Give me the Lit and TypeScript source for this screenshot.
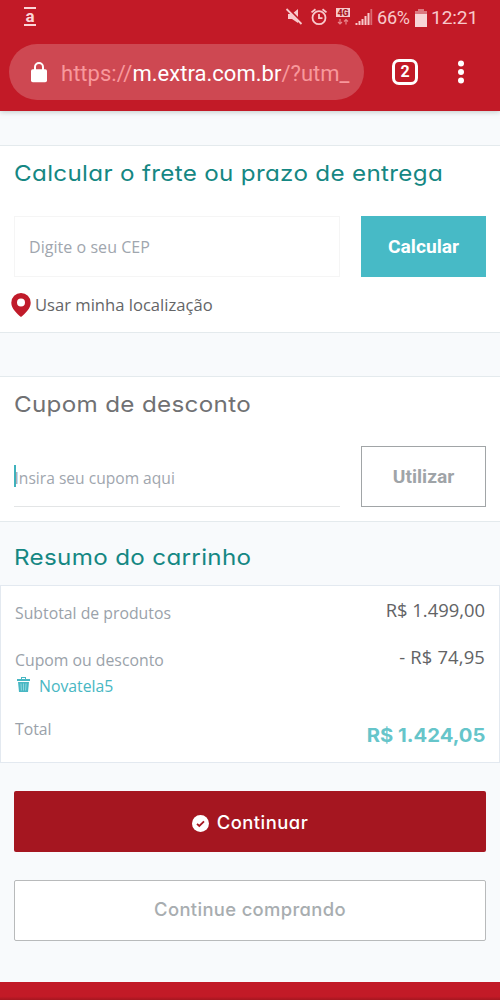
import { LitElement, html, css } from "lit";
import { customElement } from "lit/decorators.js";

@customElement("app-root")
export class AppRoot extends LitElement {
  static styles = css`
    :host { display: block; width: 500px; height: 1000px; overflow: hidden; background: #f8fafc; font-family: "Open Sans", "Noto Sans", sans-serif; color: #646567; }
    * { box-sizing: border-box; }
    svg { display: block; flex: none; }
    .page { height: 1000px; display: flex; flex-direction: column; white-space: nowrap; }
    .chrome { height: 111px; flex: none; background: #c21a27; box-shadow: 0 1px 5px #8fa09c88; font-family: Roboto, sans-serif; }
    .status { height: 35px; display: flex; align-items: center; padding: 0 21px 0 24px; color: #f8c9cb; }
    .app { width: 12px; border: solid #fbd5d7; border-width: 2px 0; color: #fbd5d7; font-size: 17px; font-weight: 700; line-height: 15px; height: 19px; text-align: center; margin-top: -2px; }
    .grow { flex: 1; }
    .icons { display: flex; align-items: center; }
    .pct { font-size: 18px; letter-spacing: -0.2px; margin-left: 3px; width: 38px; line-height: 35px; }
    .time { font-size: 19.2px; line-height: 35px; margin-left: 4px; width: 48px; letter-spacing: -0.15px; }
    .bar { display: flex; align-items: center; padding: 9px 0 0 9px; }
    .pill { width: 355px; height: 56px; border-radius: 28px; background: #ce4852; display: flex; align-items: center; padding-left: 22px; }
    .url { margin-left: 14px; font-size: 22px; color: #f8989c; line-height: 56px; padding-top: 3px; letter-spacing: 0.02px; }
    .url b { font-weight: 400; color: #fff; }
    .tabs { margin-left: 28px; width: 26px; height: 26px; border: 3px solid #fff; border-radius: 7px; color: #fff; font-size: 16px; font-weight: 700; line-height: 20px; text-align: center; }
    .dots { margin-left: 39px; }
    .section { background: #fff; border: 1px solid #e4eaed; border-width: 1px 0; flex: none; padding: 0 14px; }
    .ship { margin-top: 34px; height: 188px; }
    .coupon { margin-top: 43px; height: 146px; }
    h2 { margin: 0; font-family: Inter, sans-serif; font-weight: 400; font-size: 22px; font-feature-settings: "cv11"; line-height: 30px; color: #158783; letter-spacing: 0.29px; transform: scaleX(1.1); transform-origin: left; }
    .ship h2 { margin-top: 12px; }
    .coupon h2 { margin-top: 12px; color: #707173; }
    .row { display: flex; gap: 21px; }
    .ship .row { margin-top: 28px; }
    .coupon .row { margin-top: 27px; }
    .field { width: 326px; height: 61px; border: 1px solid #f5f5f5; padding-left: 14px; font-size: 16px; line-height: 61px; color: #a0a6ae; letter-spacing: 0.05px; }
    .line { border-width: 0 0 1px; border-color: #e3e5e6; padding: 0; display: flex; align-items: center; font-size: 15.6px; line-height: 58px; padding-top: 3px; letter-spacing: 0; }
    .caret { width: 1.5px; height: 22px; background: #3fb2bd; margin-right: -1px; margin-top: -3px; }
    .btn { width: 125px; height: 61px; background: #47bac6; color: #fff; font: 700 19.2px/61px Roboto, sans-serif; text-align: center; }
    .ghost { background: #fff; border: 1px solid #a1a5a7; color: #9fa4a8; line-height: 60px; }
    .loc { display: flex; align-items: center; margin: 13px 0 0 -3px; height: 29px; font-size: 16.6px; gap: 4px; }
    .band { height: 63px; flex: none; padding: 20px 14px 0; }
    .box { height: 178px; flex: none; background: #fff; border: 1px solid #e3e9f0; padding: 0 14px; color: #9aa2aa; font-size: 15.8px; }
    .sum { display: flex; justify-content: space-between; }
    .sum .val { color: #626365; font-size: 18.4px; }
    .a { margin-top: 12px; height: 48px; line-height: 30px; }
    .a .val { line-height: 23px; }
    .b { height: 27px; line-height: 28px; }
    .b .val { line-height: 21px; letter-spacing: 0.15px; }
    .code { display: flex; align-items: center; color: #48b7c3; height: 26px; gap: 8px; padding-left: 3px; }
    .code svg { margin-top: -3px; margin-left: -1px; margin-right: 1px; }
    .c { margin-top: 17px; line-height: 26px; }
    .c .total { font: 700 19px/39px Inter, sans-serif; color: #66c5ca; transform: scaleX(1.065); transform-origin: right; }
    .cta { margin: 28px 14px 0; height: 61px; flex: none; border-radius: 2px; background: #a51620; display: flex; justify-content: center; align-items: center; gap: 8px; color: #fff; font: 500 18.4px/60px Inter, sans-serif; font-feature-settings: "cv11"; letter-spacing: 0.5px; }
    .cta span { padding-top: 1px; }
    .cta svg { margin-top: 4px; }
    .more { background: #fff; border: 1px solid #b8babb; color: #a8adb0; letter-spacing: 0.35px; }
    .more span { padding: 0 0 3px; }
    .foot { margin-top: 41px; flex: 1; background: linear-gradient(#c21a27 80%, #a51620); }
  `;

  render() {
    return html`<div class="page">
      <div class="chrome">
        <div class="status">
          <div class="app">a</div>
          <div class="grow"></div>
          <div class="icons">
            <svg width="90" height="20" viewBox="0 0 90 20" fill="none" stroke="#f8c9cb">
              <path d="M4 6h4l6-5v14l-6-4H4z" fill="#f8c9cb" stroke="none"/>
              <path d="M4 .3L19 15.5" stroke="#c21a27" stroke-width="2"/><path d="M2.5 1L17.5 16" stroke-width="1.8"/>
              <circle cx="35" cy="9.7" r="6.5" stroke-width="1.8"/><path d="M35 6v4.2h3.5M27.5 4.4l4-3.2M42.5 4.4l-4-3.2" stroke-width="1.8"/>
              <path d="M52 0h14v9H52z" fill="#f8c9cb" stroke="none"/><text x="59" y="7.6" text-anchor="middle" font-family="Roboto" font-weight="900" font-size="8.8" fill="#a51620" stroke="none">4G</text>
              <path d="M56 11v5M54 14l2 2 2-2M62 16.5v-5M60 13.5l2-2 2 2" stroke="#e8868c" stroke-width="1.2"/>
              <path d="M72.5 17v-2M75.5 17v-4M78.5 17v-6M81.5 17V8M84.5 17V5" stroke-width="2"/><path d="M87.3 17V1" stroke="#d96c74" stroke-width="1.8"/>
            </svg>
            <span class="pct">66%</span>
            <svg width="12" height="18" viewBox="0 0 12 18"><path d="M3.5 0h5v2H12v16H0V2h3.5z" fill="#f8d5d7"/><path d="M3.5 0h5v2H12v3H0V2h3.5z" fill="#dc7880"/></svg>
            <span class="time">12:21</span>
          </div>
        </div>
        <div class="bar">
          <div class="pill">
            <svg width="16" height="21" viewBox="0 0 16 21"><rect y="7.2" width="16" height="13" rx="1.8" fill="#fff"/><path d="M4 8V5a4 4 0 0 1 8 0v3" fill="none" stroke="#fff" stroke-width="2"/></svg>
            <span class="url">https://<b>m.extra.com.br</b>/?utm_</span>
          </div>
          <div class="tabs">2</div>
          <svg class="dots" width="8" height="24" viewBox="0 0 8 24" fill="#fff"><circle cx="4" cy="3.5" r="3"/><circle cx="4" cy="12" r="3"/><circle cx="4" cy="20.5" r="3"/></svg>
        </div>
      </div>
      <div class="section ship">
        <h2>Calcular o frete ou prazo de entrega</h2>
        <div class="row"><div class="field">Digite o seu CEP</div><div class="btn">Calcular</div></div>
        <div class="loc"><svg width="20" height="24" viewBox="0 0 20 24"><path fill="#c01b2a" fill-rule="evenodd" d="M10 0a9.7 9.7 0 0 0-9.7 9.7C.3 15.5 6 20.6 10 24c4-3.4 9.7-8.5 9.7-14.3A9.7 9.7 0 0 0 10 0zm0 5.5a4 4 0 1 1 0 8 4 4 0 0 1 0-8z"/></svg><span>Usar minha localização</span></div>
      </div>
      <div class="section coupon">
        <h2>Cupom de desconto</h2>
        <div class="row"><div class="field line"><i class="caret"></i><span>Insira seu cupom aqui</span></div><div class="btn ghost">Utilizar</div></div>
      </div>
      <div class="band"><h2>Resumo do carrinho</h2></div>
      <div class="box">
        <div class="sum a"><span>Subtotal de produtos</span><span class="val">R$ 1.499,00</span></div>
        <div class="sum b"><span>Cupom ou desconto</span><span class="val">- R$ 74,95</span></div>
        <div class="code"><svg width="13" height="16" viewBox="0 0 13 16" fill="#48b7c3"><path d="M4 2V0h5v2h4v2H0V2zM5 1v1h3V1z" fill-rule="evenodd"/><path d="M1 5h11l-1 10H2z"/><path d="M4 6.5l.4 7M6.5 6.5v7M9 6.5l-.4 7" stroke="#a5dfe5" stroke-width=".8"/></svg><span>Novatela5</span></div>
        <div class="sum c"><span>Total</span><span class="total">R$ 1.424,05</span></div>
      </div>
      <div class="cta"><svg width="17" height="17" viewBox="0 0 17 17"><circle cx="8.5" cy="8.5" r="8.5" fill="#fff"/><path d="M5 8.8l2.3 2.2L12 6.3" fill="none" stroke="#a51620" stroke-width="1.8"/></svg><span>Continuar</span></div>
      <div class="cta more"><span>Continue comprando</span></div>
      <div class="foot"></div>
    </div>`;
  }
}
